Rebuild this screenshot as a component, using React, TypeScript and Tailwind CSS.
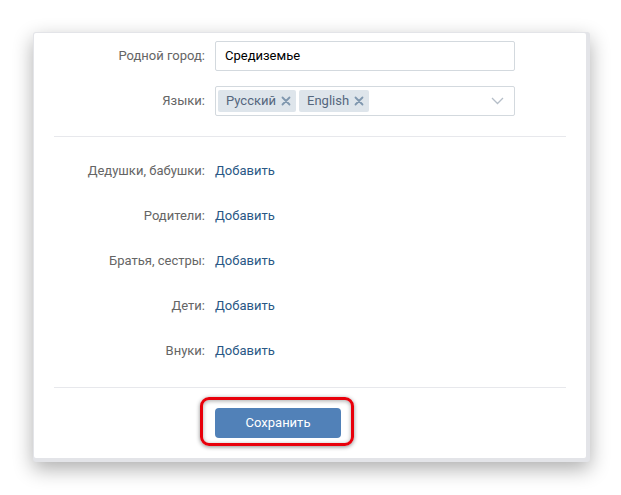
const font = { fontFamily: 'Roboto, "Open Sans", sans-serif' };

function Label({ children }: { children: React.ReactNode }) {
  return <div className="w-[171px] shrink-0 text-right text-[13px] text-[#656565]">{children}</div>;
}

function Chip({ text }: { text: string }) {
  return (
    <div className="flex h-[22px] items-center gap-[5px] rounded-[2px] bg-[#dee5eb] pl-[8px] pr-[5px] text-[13px] text-[#55677d]">
      <span>{text}</span>
      <svg width="10" height="10" viewBox="0 0 10 10">
        <path d="M1.5 1.5 L8.5 8.5 M8.5 1.5 L1.5 8.5" stroke="#7f97ae" strokeWidth="1.8" strokeLinecap="round" />
      </svg>
    </div>
  );
}

const relatives = ["Дедушки, бабушки:", "Родители:", "Братья, сестры:", "Дети:", "Внуки:"];

export default function App() {
  return (
    <div className="min-h-[495px] w-[621px] bg-white pl-[33px] pt-[32px]" style={font}>
      <div className="w-[557px] rounded-[3px] bg-[#e3e4e8] pb-[4px] pl-px pr-[4px] pt-px shadow-[0_7px_20px_rgba(0,0,0,0.32)]">
        <div className="rounded-[2px] bg-white pb-[20px] pt-[8px]">
          <div className="flex flex-col gap-[15px]">
            <div className="flex items-center gap-[10px]">
              <Label>Родной город:</Label>
              <div className="flex h-[30px] w-[300px] items-center rounded-[2px] border border-[#d3d9de] px-[9px] text-[13px] text-black">
                Средиземье
              </div>
            </div>
            <div className="flex items-center gap-[10px]">
              <Label>Языки:</Label>
              <div className="flex h-[30px] w-[300px] items-center gap-[3px] rounded-[2px] border border-[#d3d9de] pl-[2px] pr-[10px]">
                <Chip text="Русский" />
                <Chip text="English" />
                <svg className="ml-auto" width="13" height="8" viewBox="0 0 13 8">
                  <path d="M1 1 L6.5 6.5 L12 1" stroke="#b5bec8" strokeWidth="1.3" fill="none" />
                </svg>
              </div>
            </div>
          </div>

          <div className="mx-[20px] mt-[20px] h-px bg-[#e7e8ec]" />

          <div className="flex flex-col pt-[11px]">
            {relatives.map((r) => (
              <div key={r} className="flex h-[45px] items-center gap-[10px]">
                <Label>{r}</Label>
                <span className="text-[13px] text-[#2a5885]">Добавить</span>
              </div>
            ))}
          </div>

          <div className="mx-[20px] mt-[14px] h-px bg-[#e7e8ec]" />

          <div className="flex pl-[181px] pt-[20px]">
            <div className="relative">
              <button className="h-[30px] w-[126px] rounded-[4px] bg-[#5181b8] text-[13px] text-white">
                Сохранить
              </button>
              <span className="pointer-events-none absolute -bottom-[8px] -left-[15px] -right-[13px] -top-[11px] rounded-[9px] border-[3px] border-[#e8000b] shadow-[0_1px_4px_rgba(0,0,0,0.45),inset_0_1px_4px_rgba(0,0,0,0.35)]" />
            </div>
          </div>
        </div>
      </div>
    </div>
  );
}
